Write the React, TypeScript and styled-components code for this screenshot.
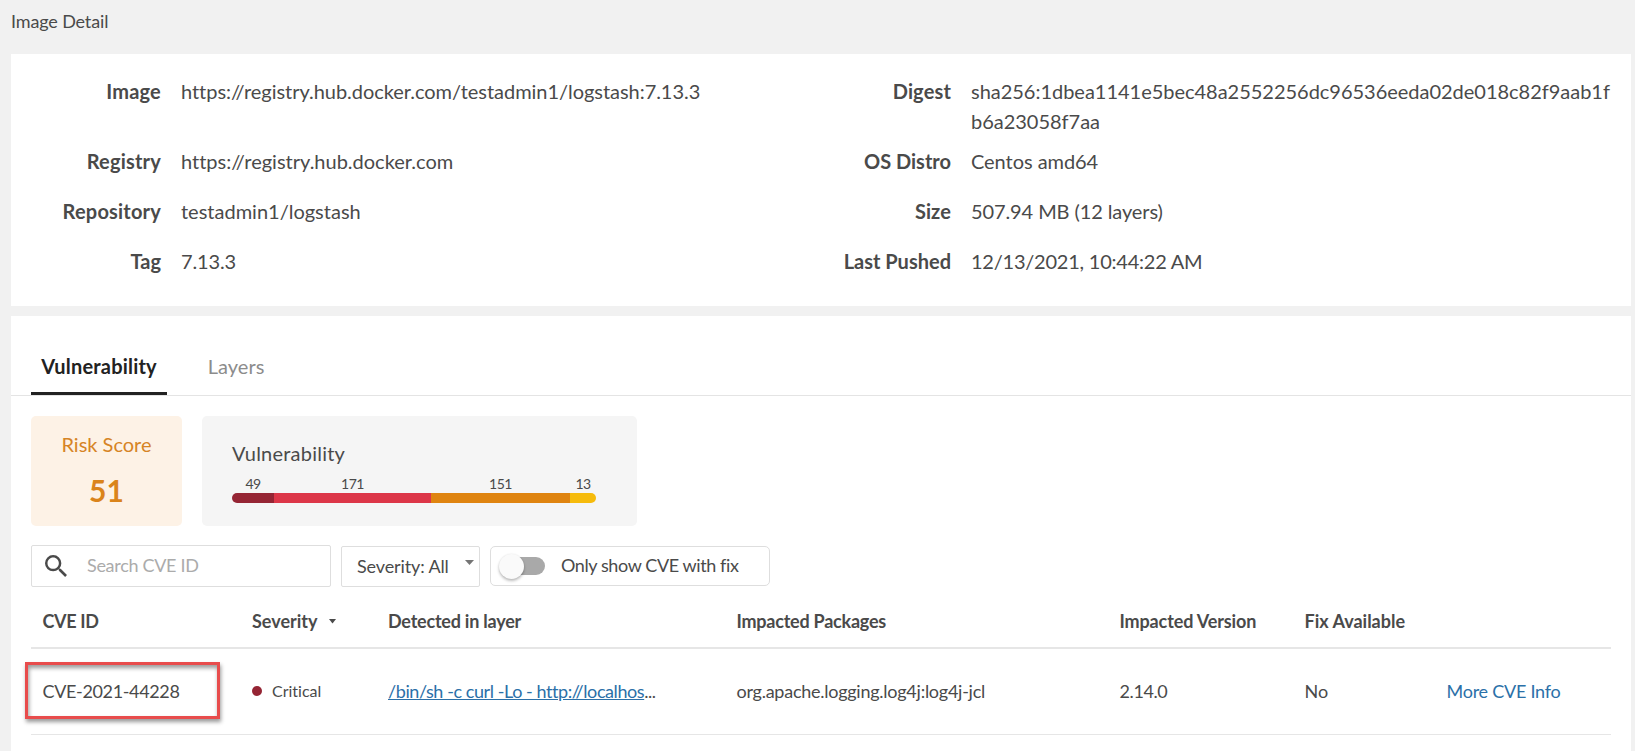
import React from "react";
import styled, { createGlobalStyle } from "styled-components";

const GlobalStyle = createGlobalStyle`
  * { box-sizing: border-box; }
  body {
    margin: 0;
    background: #f1f1f1;
    color: #4a4a4a;
    font-family: Lato, "Liberation Sans", sans-serif;
    font-size: 18px;
    font-variant-ligatures: none;
  }
`;

const Page = styled.main`
  height: 751px;
  padding: 0 4px 0 11px;
  display: flex;
  flex-direction: column;
  overflow: hidden;
`;

const PageTitle = styled.h1`
  flex: none;
  margin: 0;
  height: 54px;
  padding-top: 9px;
  font-size: 18px;
  font-weight: 400;
  line-height: 24px;
  letter-spacing: -0.14px;
`;

const Card = styled.section`
  background: #fff;
`;

const DetailCard = styled(Card)`
  flex: none;
  height: 252px;
  margin-bottom: 10px;
  padding: 22px 20px 0;
  display: grid;
  grid-template-columns: 1fr 1fr;
`;

const DetailList = styled.dl`
  margin: 0;
  display: grid;
  grid-template-columns: 130px 640px;
  grid-template-rows: 70px 50px 50px 50px;
  column-gap: 20px;
  font-size: 20px;
  line-height: 30px;
`;

const Term = styled.dt<{ $track: number }>`
  text-align: right;
  font-weight: 700;
  white-space: nowrap;
  letter-spacing: ${(p) => p.$track}px;
`;

const Value = styled.dd<{ $track: number }>`
  margin: 0;
  word-break: break-all;
  letter-spacing: ${(p) => p.$track}px;
`;

const VulnCard = styled(Card)`
  flex: 1;
  padding-top: 20px;
`;

const Tabs = styled.nav`
  display: flex;
  height: 60px;
  padding-left: 20px;
  gap: 31px;
  border-bottom: 1px solid #e4e4e4;
`;

const Tab = styled.a<{ $active?: boolean; $width: number }>`
  width: ${(p) => p.$width}px;
  padding-top: 15px;
  text-align: center;
  font-size: 20px;
  line-height: 30px;
  letter-spacing: ${(p) => (p.$active ? 0.2 : 0.05)}px;
  font-weight: ${(p) => (p.$active ? 700 : 400)};
  color: ${(p) => (p.$active ? "#222" : "#8c8c8c")};
  border-bottom: 3px solid ${(p) => (p.$active ? "#222" : "transparent")};
`;

const Content = styled.div`
  padding: 20px 20px 0;
`;

const Summary = styled.div`
  display: flex;
  gap: 20px;
  height: 110px;
`;

const RiskBox = styled.div`
  width: 151px;
  padding-top: 13px;
  border-radius: 5px;
  background: #fdf2e6;
  color: #d68425;
  text-align: center;
`;

const RiskLabel = styled.div`
  font-size: 20px;
  line-height: 30px;
`;

const RiskValue = styled.div`
  margin-top: 11px;
  font-size: 30px;
  font-weight: 700;
  line-height: 40px;
  color: #da841b;
`;

const VulnBox = styled.div`
  width: 435px;
  padding: 22px 41px 0 30px;
  border-radius: 5px;
  background: #f5f5f5;
`;

const VulnTitle = styled.div`
  font-size: 20px;
  line-height: 30px;
  letter-spacing: 0.23px;
`;

const Bar = styled.div`
  display: flex;
  margin-top: 7px;
`;

const Segment = styled.div<{ $size: number; $color: string }>`
  flex: 0 0 ${(p) => p.$size}px;
  font-size: 14px;
  line-height: 18px;
  letter-spacing: -0.5px;
  text-align: center;

  &::after {
    content: "";
    display: block;
    height: 10px;
    background: ${(p) => p.$color};
  }
  &:first-child::after { border-radius: 5px 0 0 5px; }
  &:last-child::after { border-radius: 0 5px 5px 0; }
`;

const Filters = styled.div`
  display: flex;
  gap: 10px;
  height: 42px;
  margin-top: 19px;
`;

const Field = styled.div`
  display: flex;
  align-items: center;
  border: 1px solid #dedede;
  border-radius: 2px;
  white-space: nowrap;
`;

const FieldText = styled.span<{ $track: number }>`
  padding-bottom: 2px;
  letter-spacing: ${(p) => p.$track}px;
`;

const SearchField = styled(Field)`
  width: 300px;
  padding-left: 13px;
  gap: 20px;
  color: #ababab;
`;

const SearchIcon = styled.svg`
  margin-bottom: 1px;
`;

const SelectField = styled(Field)`
  width: 139px;
  height: 41px;
  margin-top: 1px;
  padding: 0 5px 0 15px;
  justify-content: space-between;
`;

const SelectArrow = styled.svg`
  margin-bottom: 8px;
`;

const ToggleField = styled(Field)`
  width: 280px;
  height: 40px;
  margin-top: 1px;
  padding-left: 8px;
  gap: 16px;
  border-radius: 5px;
`;

const Track = styled.span`
  display: flex;
  align-items: center;
  width: 46px;
  height: 18px;
  border-radius: 9px;
  background: linear-gradient(to right, transparent 9px, #a9a9a9 9px);
`;

const Thumb = styled.span`
  width: 25px;
  height: 25px;
  border-radius: 50%;
  background: #fafafa;
  box-shadow: 0 2px 3px rgba(0, 0, 0, 0.26), 0 0 2px rgba(0, 0, 0, 0.08);
`;

const Table = styled.div`
  margin-top: 8px;
`;

const Row = styled.div<{ $head?: boolean }>`
  display: grid;
  grid-template-columns: 209.5px 136px 348.5px 383px 185px 142px 1fr;
  align-items: center;
  padding: 0 0 ${(p) => (p.$head ? 0 : 2)}px 11.5px;
  height: ${(p) => (p.$head ? 54 : 86)}px;
  font-weight: ${(p) => (p.$head ? 700 : 400)};
  border-bottom: ${(p) => (p.$head ? 2 : 1)}px solid #e6e6e6;
  white-space: nowrap;
`;

const Cell = styled.div<{ $gap?: number; $track?: number }>`
  position: relative;
  display: flex;
  align-items: center;
  gap: ${(p) => p.$gap ?? 0}px;
  letter-spacing: ${(p) => p.$track ?? 0}px;
`;

const Critical = styled(Cell)`
  font-size: 16px;
`;

const Dot = styled.i`
  width: 10px;
  height: 10px;
  border-radius: 50%;
  background: #952534;
`;

const Link = styled.a<{ $underlined?: boolean }>`
  color: #2b70a8;
  text-decoration: ${(p) => (p.$underlined ? "underline" : "none")};
`;

const Highlight = styled.span`
  position: absolute;
  left: -17.5px;
  top: -18px;
  width: 195px;
  height: 57px;
  border: 3px solid #e84c4c;
  box-shadow: 1px 3px 4px rgba(0, 0, 0, 0.4), inset 1px 3px 4px rgba(0, 0, 0, 0.4);
`;

type Detail = { term: string; value: string; termTrack: number; track: number };

const leftDetails: Detail[] = [
  { term: "Image", value: "https://registry.hub.docker.com/testadmin1/logstash:7.13.3", termTrack: 0.2, track: -0.04 },
  { term: "Registry", value: "https://registry.hub.docker.com", termTrack: 0.2, track: 0 },
  { term: "Repository", value: "testadmin1/logstash", termTrack: 0.2, track: 0 },
  { term: "Tag", value: "7.13.3", termTrack: 0, track: -0.15 },
];

const rightDetails: Detail[] = [
  {
    term: "Digest",
    value: "sha256:1dbea1141e5bec48a2552256dc96536eeda02de018c82f9aab1fb6a23058f7aa",
    termTrack: 0.15,
    track: -0.02,
  },
  { term: "OS Distro", value: "Centos amd64", termTrack: 0, track: -0.05 },
  { term: "Size", value: "507.94 MB (12 layers)", termTrack: 0.1, track: -0.1 },
  { term: "Last Pushed", value: "12/13/2021, 10:44:22 AM", termTrack: 0, track: -0.23 },
];

const segments = [
  { count: 49, size: 42, color: "#952534" },
  { count: 171, size: 157, color: "#dc3648" },
  { count: 151, size: 139, color: "#df8410" },
  { count: 13, size: 26, color: "#f6bb0c" },
];

function Details({ items }: { items: Detail[] }) {
  return (
    <DetailList>
      {items.map((d) => (
        <React.Fragment key={d.term}>
          <Term $track={d.termTrack}>{d.term}</Term>
          <Value $track={d.track}>{d.value}</Value>
        </React.Fragment>
      ))}
    </DetailList>
  );
}

export default function App() {
  return (
    <>
      <GlobalStyle />
      <Page>
        <PageTitle>Image Detail</PageTitle>
        <DetailCard>
          <Details items={leftDetails} />
          <Details items={rightDetails} />
        </DetailCard>
        <VulnCard>
          <Tabs>
            <Tab $active $width={136}>Vulnerability</Tab>
            <Tab $width={76}>Layers</Tab>
          </Tabs>
          <Content>
            <Summary>
              <RiskBox>
                <RiskLabel>Risk Score</RiskLabel>
                <RiskValue>51</RiskValue>
              </RiskBox>
              <VulnBox>
                <VulnTitle>Vulnerability</VulnTitle>
                <Bar>
                  {segments.map((s) => (
                    <Segment key={s.count} $size={s.size} $color={s.color}>{s.count}</Segment>
                  ))}
                </Bar>
              </VulnBox>
            </Summary>
            <Filters>
              <SearchField>
                <SearchIcon width="22" height="22" viewBox="3 3 17.5 17.5" fill="#4a4a4a">
                  <path d="M15.5 14h-.79l-.28-.27A6.471 6.471 0 0 0 16 9.5 6.5 6.5 0 1 0 9.5 16c1.61 0 3.09-.59 4.23-1.57l.27.28v.79l5 4.99L20.49 19l-4.99-5zm-6 0C7.01 14 5 11.99 5 9.5S7.01 5 9.5 5 14 7.01 14 9.5 11.99 14 9.5 14z" />
                </SearchIcon>
                <FieldText $track={-0.3}>Search CVE ID</FieldText>
              </SearchField>
              <SelectField>
                <FieldText $track={-0.12}>Severity: All</FieldText>
                <SelectArrow width="9" height="5"><path d="M0 0h9L4.5 5z" fill="#757575" /></SelectArrow>
              </SelectField>
              <ToggleField>
                <Track><Thumb /></Track>
                <FieldText $track={-0.4}>Only show CVE with fix</FieldText>
              </ToggleField>
            </Filters>
            <Table>
              <Row $head>
                <Cell $track={-0.35}>CVE ID</Cell>
                <Cell $gap={11}>
                  Severity
                  <svg width="7" height="5"><path d="M0 0h7L3.5 4.5z" fill="#4a4a4a" /></svg>
                </Cell>
                <Cell $track={-0.22}>Detected in layer</Cell>
                <Cell $track={-0.23}>Impacted Packages</Cell>
                <Cell $track={-0.13}>Impacted Version</Cell>
                <Cell>Fix Available</Cell>
              </Row>
              <Row>
                <Cell $track={-0.35}>CVE-2021-44228<Highlight /></Cell>
                <Critical $gap={10}><Dot />Critical</Critical>
                <Cell $track={-0.42}><Link $underlined>/bin/sh -c curl -Lo - http://localhos</Link>...</Cell>
                <Cell $track={-0.25}>org.apache.logging.log4j:log4j-jcl</Cell>
                <Cell $track={-0.4}>2.14.0</Cell>
                <Cell>No</Cell>
                <Cell $track={-0.25}><Link>More CVE Info</Link></Cell>
              </Row>
            </Table>
          </Content>
        </VulnCard>
      </Page>
    </>
  );
}
